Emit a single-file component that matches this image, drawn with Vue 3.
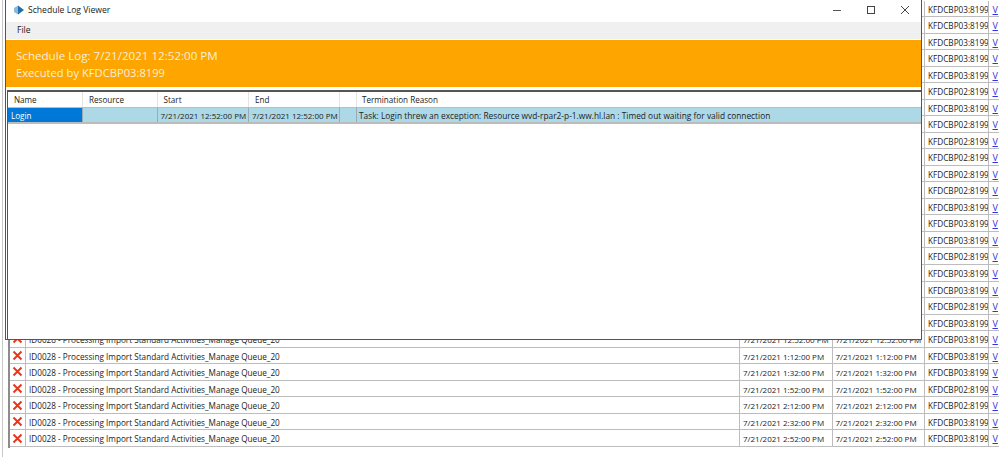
<script setup>
const servers = '3,3,3,3,3,2,3,2,2,2,2,2,3,3,3,2,3,3,2,3,3,3,3,2,2,3,3'.split(',')
const visibleTimes = ['12:52:00', '1:12:00', '1:32:00', '1:52:00', '2:12:00', '2:32:00', '2:52:00']
const rows = servers.map((s, i) => {
  const t = visibleTimes[i - 20]
  return { server: `KFDCBP0${s}:8199`, visible: i >= 20, time: t ? `7/21/2021 ${t} PM` : '' }
})
</script>

<template>
  <div class="desk">
    <div class="frame">
      <div class="grid">
        <div v-for="(r, i) in rows" :key="i" class="row">
          <div class="c-icon">
            <svg v-if="r.visible" width="11" height="11" viewBox="0 0 11 11"><path d="M1.5 1.5 9.5 9.5M9.5 1.5 1.5 9.5" stroke="#e8341c" stroke-width="1.9" fill="none"/></svg>
          </div>
          <div class="c-name"><template v-if="r.visible">ID0028 - Processing Import Standard Activities_Manage Queue_20</template></div>
          <div class="c-time">{{ r.time }}</div>
          <div class="c-time">{{ r.time }}</div>
          <div class="c-server">{{ r.server }}</div>
          <div class="c-link"><a>V</a></div>
        </div>
      </div>
    </div>

    <section class="window">
      <header class="title">
        <svg class="logo" width="12" height="12" viewBox="0 0 12 12">
          <path d="M1 4 5 1.5 6.5 6 5 10.5 1 8Z" fill="#8fb7d6"/>
          <path d="M5 1.5 11 6 5 10.5Z" fill="#1f6fa8"/>
        </svg>
        <span class="title-text">Schedule Log Viewer</span>
        <div class="controls">
          <svg width="10" height="10" viewBox="0 0 10 10"><path d="M1 5.5H9" stroke="#555" fill="none"/></svg>
          <svg width="10" height="10" viewBox="0 0 10 10"><rect x="1.5" y="1.5" width="7" height="7" stroke="#444" fill="none"/></svg>
          <svg width="10" height="10" viewBox="0 0 10 10"><path d="M1 1 9 9M9 1 1 9" stroke="#444" fill="none"/></svg>
        </div>
      </header>
      <nav class="menu"><span>File</span></nav>
      <div class="banner">
        <div class="b1">Schedule Log: 7/21/2021 12:52:00 PM</div>
        <div class="b2">Executed by KFDCBP03:8199</div>
      </div>
      <div class="table">
        <div class="thead">
          <div class="h name">Name</div>
          <div class="h res">Resource</div>
          <div class="h start">Start</div>
          <div class="h end">End</div>
          <div class="h gap"></div>
          <div class="h reason">Termination Reason</div>
        </div>
        <div class="tbody">
          <div class="d name selected">Login</div>
          <div class="d res"></div>
          <div class="d start">7/21/2021 12:52:00 PM</div>
          <div class="d end">7/21/2021 12:52:00 PM</div>
          <div class="d gap"></div>
          <div class="d reason">Task: Login threw an exception: Resource wvd-rpar2-p-1.ww.hl.lan : Timed out waiting for valid connection</div>
        </div>
      </div>
    </section>
  </div>
</template>

<style scoped>
.desk { position: relative; width: 999px; height: 457px; box-sizing: border-box; padding-left: 2px; background: #fff; overflow: hidden; font-family: "Open Sans", "Noto Sans", sans-serif; font-size: 8.2px; color: #222; }
.frame { height: 457px; box-sizing: border-box; border-left: 1px solid #c8c8c8; padding: 0.5px 0 0 5px; }
.grid { border-left: 2px solid #8c8c8c; height: 447px; }
.row { display: flex; height: 16.54px; box-sizing: border-box; border-bottom: 1px solid #bdbdbd; line-height: 17px; white-space: nowrap; }
.row > div { box-sizing: border-box; border-right: 1px solid #bdbdbd; overflow: hidden; }
.c-icon { width: 16px; display: flex; align-items: center; justify-content: center; }
.c-name { width: 714px; padding-left: 3px; }
.c-time { width: 92.5px; padding-left: 3px; font-size: 8px; }
.c-server { width: 64px; padding-left: 3px; }
.c-link { flex: 1; padding-left: 3.5px; border-right: 0 !important; }
.c-link a { color: #3030e0; text-decoration: underline; font-size: 9px; }
.window { position: absolute; left: 5px; top: 0; width: 917px; height: 340px; box-sizing: border-box; background: #fff; border: solid #555; border-width: 0 1px 1px; display: flex; flex-direction: column; }
.title { height: 20px; margin-bottom: 2px; flex: none; display: flex; align-items: center; padding-left: 7px; font-size: 8.6px; color: #222; }
.title-text { margin-left: 3px; }
.controls { margin-left: auto; display: flex; gap: 24px; padding-right: 11px; }
.menu { height: 17px; flex: none; background: #f0f0f0; padding-left: 11px; line-height: 17px; font-size: 8.6px; color: #222; }
.banner { height: 47px; flex: none; box-sizing: border-box; margin-top: 1px; background: #ffa500; color: #f6efdc; line-height: 16.5px; padding: 8px 0 0 10px; }
.b1 { font-size: 11.6px; }
.b2 { font-size: 11.2px; }
.table { flex: 1; margin: 3px 0 0 1px; border: solid #555; border-width: 2px 0 0 1px; font-size: 8.1px; }
.thead, .tbody { display: flex; }
.thead { height: 15px; line-height: 16px; }
.tbody { height: 17px; line-height: 15px; background: #add8e6; border: solid #bcbcbc; border-width: 1px 0 2px; box-sizing: border-box; color: #222; }
.h, .d { box-sizing: border-box; white-space: nowrap; overflow: hidden; }
.h { padding-left: 6px; border-right: 1px solid #e4e4e4; }
.d { border-right: 1px solid #9ab; padding-left: 3px; }
.name { width: 75px; }
.res { width: 74.5px; }
.start { width: 91.5px; }
.end { width: 91px; }
.gap { width: 17px; }
.reason { flex: 1; border-right: 0; }
.d.start, .d.end { font-size: 8px; }
.d.reason { font-size: 8.35px; padding-left: 2px; }
.h.reason { padding-left: 5px; }
.selected { background: #0078d7; color: #fff; padding-left: 3px; }
</style>
